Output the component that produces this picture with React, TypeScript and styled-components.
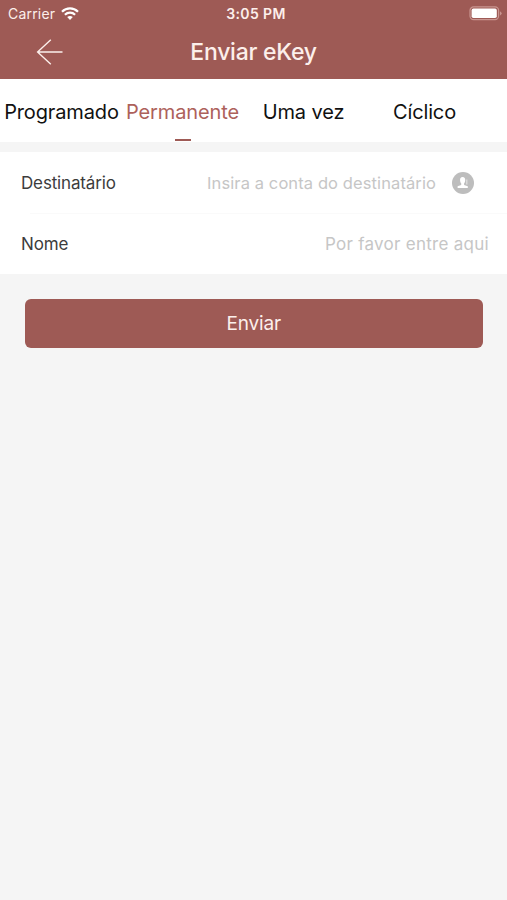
import React from "react";
import styled, { createGlobalStyle } from "styled-components";

const brand = "#9e5a55";

const GlobalStyle = createGlobalStyle`
  * { box-sizing: border-box; }
  body { margin: 0; background: #f5f5f5; font-family: Inter, "Liberation Sans", sans-serif; }
`;

const Screen = styled.main`
  display: flex;
  flex-direction: column;
  min-height: 900px;
  background: #f5f5f5;
`;

const Header = styled.header`
  height: 79px;
  background: ${brand};
  color: #fcefeb;
`;

const StatusBar = styled.div`
  display: grid;
  grid-template-columns: 1fr auto 1fr;
  align-items: center;
  height: 27px;
  padding: 0 5px 0 8px;
`;

const Carrier = styled.div`
  display: flex;
  align-items: center;
  gap: 6px;
  font-size: 14px;
  line-height: 18px;
  letter-spacing: 0.2px;
`;

const Clock = styled.time`
  padding-left: 2px;
  font-size: 14px;
  font-weight: 600;
  letter-spacing: 0.4px;
`;

const BatterySlot = styled.div`
  display: flex;
  justify-content: flex-end;
`;

const NavBar = styled.div`
  display: grid;
  grid-template-columns: 100px 1fr 100px;
  align-items: center;
  height: 50px;
`;

const BackButton = styled.button`
  display: flex;
  width: 28px;
  margin-left: 36px;
  padding: 0;
  border: 0;
  background: none;
  color: inherit;
`;

const Title = styled.h1`
  margin: 0;
  font-size: 23px;
  font-weight: 500;
  letter-spacing: -0.25px;
  text-align: center;
`;

const Tabs = styled.nav`
  display: grid;
  grid-template-columns: repeat(4, 121px);
  height: 63px;
  padding-left: 1px;
  background: #fff;
`;

const Tab = styled.button<{ $active?: boolean }>`
  display: flex;
  flex-direction: column;
  align-items: center;
  justify-content: space-between;
  padding: 21px 0 1px;
  border: 0;
  background: none;
  color: ${(p) => (p.$active ? "#ad615b" : "#111")};
  font: 400 20px/25px Inter, "Liberation Sans", sans-serif;
  letter-spacing: -0.13px;
  white-space: nowrap;

  &::after {
    content: "";
    width: 16px;
    height: 2px;
    background: ${(p) => (p.$active ? brand : "transparent")};
  }
`;

const Form = styled.section`
  margin-top: 10px;
  background: #fff;
`;

const Row = styled.div`
  display: flex;
  align-items: center;
  height: 61px;
  padding: 0 18px 0 21px;

  & + & {
    background: linear-gradient(#fafafa, #fafafa) 30px 0 / 100% 1px no-repeat;
  }
`;

const Label = styled.label`
  flex: 1;
  color: #3c3c3c;
  font-size: 17px;
  letter-spacing: -0.15px;
`;

const Placeholder = styled.span<{ $compact?: boolean }>`
  color: #c6c6c6;
  font-size: ${(p) => (p.$compact ? "16.5px" : "17px")};
  letter-spacing: ${(p) => (p.$compact ? "0.1px" : "0.28px")};
`;

const ContactButton = styled.button`
  display: flex;
  margin: 0 15px 0 16px;
  padding: 0;
  border: 0;
  background: none;
`;

const SendButton = styled.button`
  height: 49px;
  margin: 25px 24.5px 0 25px;
  border: 0;
  border-radius: 6px;
  background: ${brand};
  color: #fcefeb;
  font: 400 19px Inter, "Liberation Sans", sans-serif;
  letter-spacing: -0.2px;
`;

const tabs = ["Programado", "Permanente", "Uma vez", "Cíclico"];

export default function App() {
  return (
    <Screen>
      <GlobalStyle />
      <Header>
        <StatusBar>
          <Carrier>
            Carrier
            <svg width="18" height="13" viewBox="0 0 18 13" fill="none" stroke="#fff" strokeWidth="2.2">
              <path d="M1 4.8C5.5 .2 12.5 .2 17 4.8" />
              <path d="M3.9 7.8C6.8 5 11.2 5 14.1 7.8" />
              <path d="M6.2 10.1Q9 7.7 11.8 10.1L9 12.9Z" fill="#fff" stroke="none" />
            </svg>
          </Carrier>
          <Clock>3:05 PM</Clock>
          <BatterySlot>
            <svg width="33" height="15" viewBox="0 0 33 15">
              <rect x="1" y=".9" width="28.6" height="12.8" rx="3.6" fill="none" stroke="#c99590" strokeWidth="1.2" />
              <rect x="2.6" y="2.6" width="25.2" height="9.4" rx="1.8" fill="#fff" />
              <path d="M31 5.2Q32.6 6 32.6 7.3T31 9.4Z" fill="#c99590" />
            </svg>
          </BatterySlot>
        </StatusBar>
        <NavBar>
          <BackButton aria-label="Voltar">
            <svg width="28" height="28" viewBox="0 0 28 28" fill="none" stroke="currentColor" strokeWidth="1.4">
              <path d="M14.8 1.7 1.6 14 14.8 26.3M1.6 14H26.5" />
            </svg>
          </BackButton>
          <Title>Enviar eKey</Title>
        </NavBar>
      </Header>
      <Tabs>
        {tabs.map((name) => (
          <Tab key={name} $active={name === "Permanente"}>{name}</Tab>
        ))}
      </Tabs>
      <Form>
        <Row>
          <Label>Destinatário</Label>
          <Placeholder $compact>Insira a conta do destinatário</Placeholder>
          <ContactButton aria-label="Contatos">
            <svg width="22" height="22" viewBox="0 0 22 22">
              <circle cx="11" cy="11" r="11" fill="#bdbdbd" />
              <path d="M10.6 5C8.7 5 7.9 6.4 8.1 8.4c.1 1.4.6 2.3 1.1 2.9v1.6L5.6 14.3v1.6h10.2v-1.6l-3.7-1.4v-1.6c.5-.6 1-1.5 1.1-2.9C13.4 6.4 12.5 5 10.6 5Z" fill="#fff" />
              <path d="M14.8 7.6v4.8" stroke="#e2e2e2" strokeWidth="1.2" />
            </svg>
          </ContactButton>
        </Row>
        <Row>
          <Label>Nome</Label>
          <Placeholder>Por favor entre aqui</Placeholder>
        </Row>
      </Form>
      <SendButton>Enviar</SendButton>
    </Screen>
  );
}
